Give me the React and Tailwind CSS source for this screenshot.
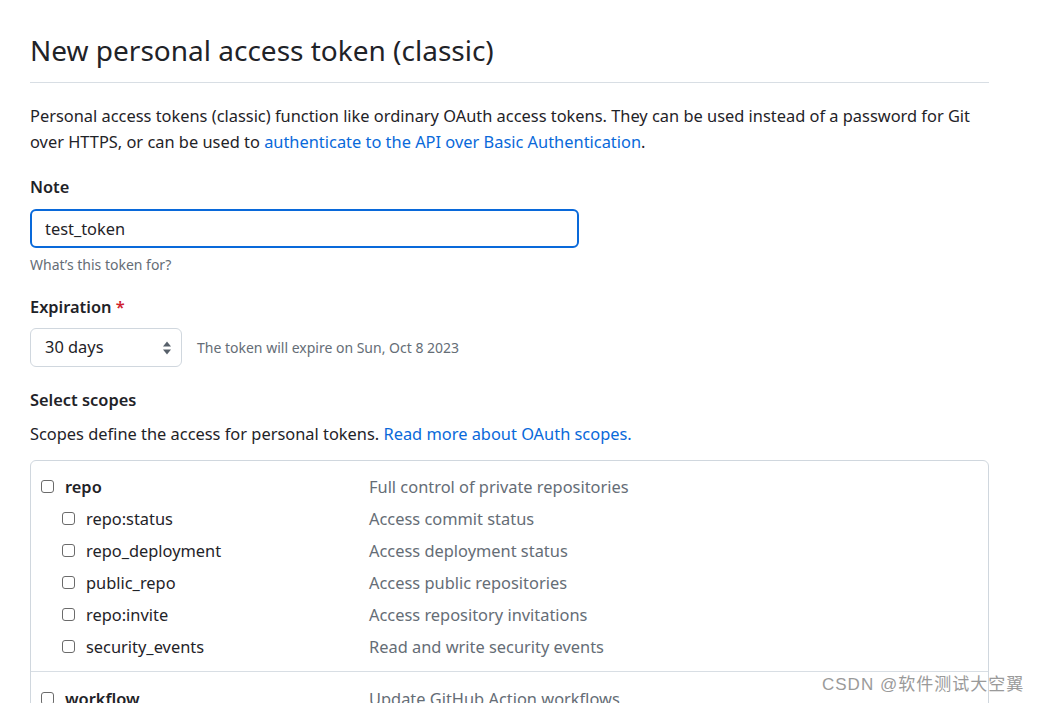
import { useState } from "react";

const font = { fontFamily: '"Noto Sans", "Open Sans", sans-serif' };

const subScopes = [
  { name: "repo:status", desc: "Access commit status" },
  { name: "repo_deployment", desc: "Access deployment status" },
  { name: "public_repo", desc: "Access public repositories" },
  { name: "repo:invite", desc: "Access repository invitations" },
  { name: "security_events", desc: "Read and write security events" },
];

function Box() {
  return <span className="inline-block w-[13px] h-[13px] border border-[#6b6b6b] rounded-[3px] bg-white shrink-0" />;
}

function ScopeRow({ name, desc, sub, bold }) {
  return (
    <div className="flex items-center h-8">
      <div className={`flex items-center w-[338px] ${sub ? "pl-[31px]" : "pl-[10px]"}`}>
        <Box />
        <span className={`ml-[11px] text-[16.4px] ${bold ? "font-semibold" : ""}`}>{name}</span>
      </div>
      <span className="text-[16.4px] text-[#656d76]">{desc}</span>
    </div>
  );
}

export default function App() {
  const [note, setNote] = useState("test_token");

  return (
    <div className="bg-white min-h-screen text-[#1f2328] relative overflow-hidden" style={font}>
      <div className="w-[959px] ml-[30px] pt-[32px]">
        <div className="border-b border-[#d8dee4] pb-[14px]">
          <h2 className="text-[28px] leading-[36px] font-normal">New personal access token (classic)</h2>
        </div>

        <p className="mt-[20px] text-[16.4px] leading-[26px]">
          Personal access tokens (classic) function like ordinary OAuth access tokens. They can be used instead of a password for Git over HTTPS, or can be used to{" "}
          <a className="text-[#0969da]">authenticate to the API over Basic Authentication</a>.
        </p>

        <div className="mt-[20px] text-[16.4px] leading-[24px] font-semibold">Note</div>
        <div className="mt-[10px] w-[549px] h-[39px] border-2 border-[#0969da] rounded-[6px] flex items-center">
          <input
            value={note}
            onChange={(e) => setNote(e.target.value)}
            className="w-full h-full px-[13px] text-[16.4px] outline-none bg-transparent"
          />
        </div>
        <div className="mt-[7px] text-[14px] leading-[20px] text-[#656d76]">What’s this token for?</div>

        <div className="mt-[20px] text-[16.4px] leading-[24px] font-semibold">
          Expiration <span className="text-[#cf222e]">*</span>
        </div>
        <div className="mt-[9px] flex items-center">
          <div className="w-[152px] h-[39px] border border-[#d0d7de] rounded-[6px] flex items-center justify-between pl-[14px] pr-[9px]">
            <span className="text-[16.4px]">30 days</span>
            <svg width="10" height="16" viewBox="0 0 10 16">
              <path d="M5 1.5 L9 6.5 H1 Z" fill="#57606a" />
              <path d="M5 14.5 L9 9.5 H1 Z" fill="#57606a" />
            </svg>
          </div>
          <span className="ml-[15px] text-[14px] text-[#656d76]">The token will expire on Sun, Oct 8 2023</span>
        </div>

        <div className="mt-[21px] text-[16.4px] leading-[24px] font-semibold">Select scopes</div>
        <p className="mt-[9px] text-[16.4px] leading-[26px]">
          Scopes define the access for personal tokens. <a className="text-[#0969da]">Read more about OAuth scopes.</a>
        </p>

        <div className="mt-[13px] border border-[#d0d7de] rounded-[6px]">
          <div className="pt-[10px] pb-[8px] border-b border-[#d8dee4]">
            <ScopeRow name="repo" desc="Full control of private repositories" bold />
            {subScopes.map((s) => (
              <ScopeRow key={s.name} name={s.name} desc={s.desc} sub />
            ))}
          </div>
          <div className="pt-[11px] pb-[8px]">
            <ScopeRow name="workflow" desc="Update GitHub Action workflows" bold />
          </div>
        </div>
      </div>

      <div className="absolute left-[822px] top-[672px] text-[17px] tracking-[1px] text-[#9a9a9a] whitespace-nowrap" style={{ fontFamily: '"Liberation Sans", "Noto Sans CJK SC", sans-serif' }}>
        CSDN @软件测试大空翼
      </div>
    </div>
  );
}
